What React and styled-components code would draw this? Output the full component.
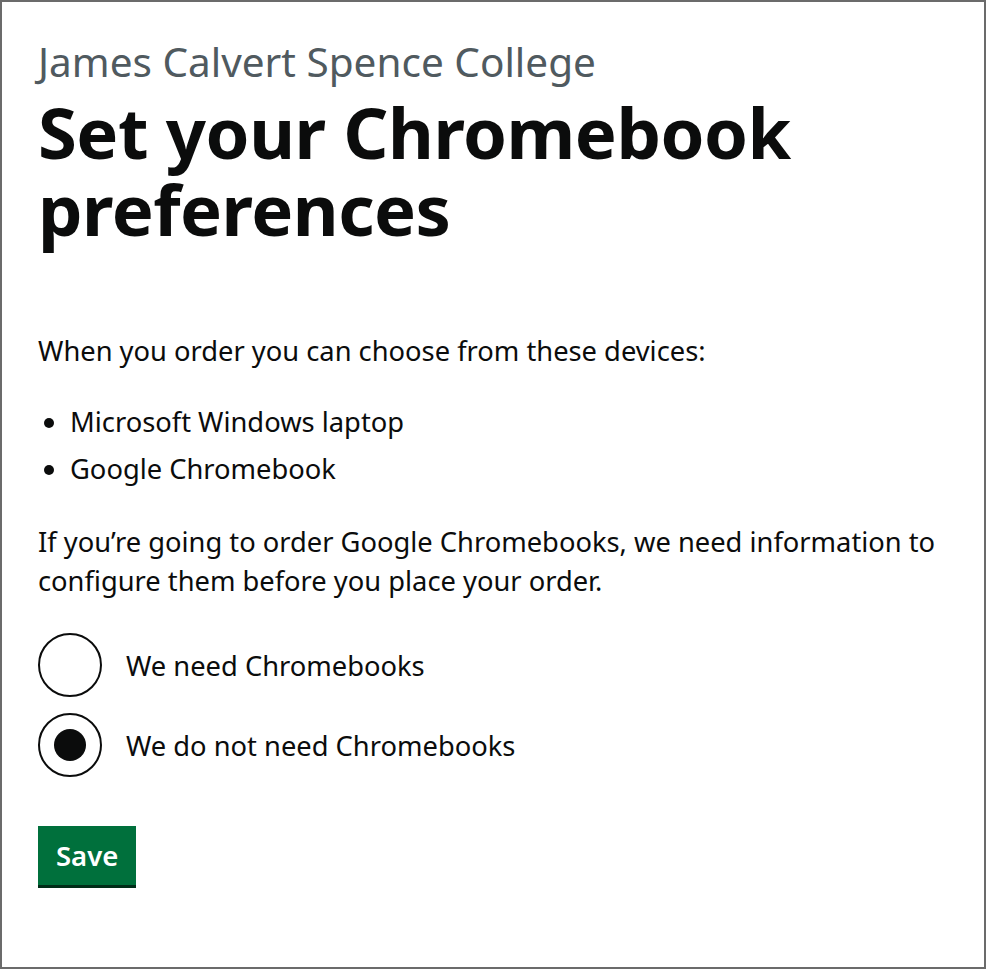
import React from "react";
import styled, { createGlobalStyle } from "styled-components";

const Global = createGlobalStyle`
  html, body { margin: 0; padding: 0; background: #fff; }
  body { font-family: "Noto Sans", "Liberation Sans", sans-serif; color: #0b0c0c; }
  * { box-sizing: border-box; }
`;

const Frame = styled.div`
  width: 986px;
  height: 969px;
  border: 2px solid #6b6b6b;
  padding: 36px 36px 0 36px;
  background: #fff;
`;

const Caption = styled.span`
  display: block;
  font-size: 40.5px;
  line-height: 48px;
  color: #505a5f;
  margin-bottom: 8px;
`;

const Heading = styled.h1`
  margin: 0 0 83px 0;
  font-size: 70.5px;
  line-height: 77px;
  font-weight: 700;
  letter-spacing: -0.5px;
`;

const Body = styled.p`
  margin: 0 0 ${(p) => p.$mb || 28}px 0;
  font-size: 27.3px;
  line-height: 39px;
`;

const List = styled.ul`
  margin: 0 0 34px 0;
  padding: 0 0 0 32px;
  font-size: 27.3px;
  line-height: 39px;
  li { margin-bottom: 8px; padding-left: 0; }
`;

const Radios = styled.div`
  display: flex;
  flex-direction: column;
  gap: 16px;
  margin-bottom: 49px;
`;

const RadioRow = styled.label`
  display: flex;
  align-items: center;
  gap: 24px;
  font-size: 27.3px;
`;

const Circle = styled.span`
  width: 64px;
  height: 64px;
  border-radius: 50%;
  border: 2.5px solid #0b0c0c;
  display: flex;
  align-items: center;
  justify-content: center;
  &::after {
    content: "";
    display: ${(p) => (p.$checked ? "block" : "none")};
    width: 32px;
    height: 32px;
    border-radius: 50%;
    background: #0b0c0c;
  }
`;

const Button = styled.button`
  background: #00703c;
  color: #fff;
  border: 0;
  box-shadow: 0 3px 0 #002d18;
  font-family: inherit;
  font-size: 27.5px;
  font-weight: 600;
  height: 59px;
  padding: 0 18px;
`;

export default function App() {
  return (
    <>
      <Global />
      <Frame>
        <Caption>James Calvert Spence College</Caption>
        <Heading>Set your Chromebook preferences</Heading>
        <Body $mb={32}>When you order you can choose from these devices:</Body>
        <List>
          <li>Microsoft Windows laptop</li>
          <li>Google Chromebook</li>
        </List>
        <Body $mb={33}>
          If you’re going to order Google Chromebooks, we need information to configure them before you place your order.
        </Body>
        <Radios>
          <RadioRow><Circle /> We need Chromebooks</RadioRow>
          <RadioRow><Circle $checked /> We do not need Chromebooks</RadioRow>
        </Radios>
        <Button>Save</Button>
      </Frame>
    </>
  );
}
